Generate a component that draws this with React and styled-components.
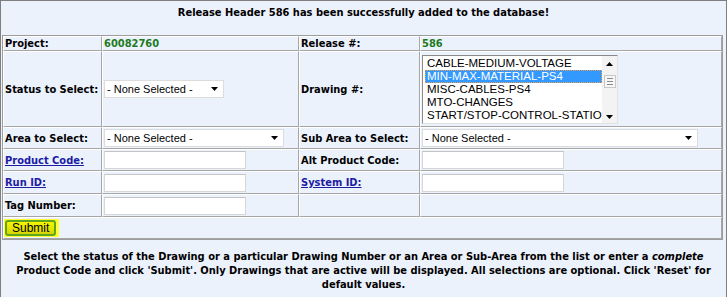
import styled, { createGlobalStyle } from "styled-components";

const GlobalStyle = createGlobalStyle`
  body {
    margin: 0;
    background: #ffffff;
  }
`;

const Panel = styled.div`
  width: 727px;
  height: 297px;
  box-sizing: border-box;
  border: 1px solid #7f7f7f;
  border-bottom: none;
  background: #ecf2fc;
  font-family: "DejaVu Sans Condensed", "DejaVu Sans", sans-serif;
  font-size: 11px;
  font-weight: bold;
  color: #000;
  overflow: hidden;
`;

const Header = styled.div`
  height: 34px;
  box-sizing: border-box;
  padding-top: 5px;
  line-height: 14px;
  text-align: center;
`;

const FormTable = styled.table`
  margin-left: 1px;
  width: 721px;
  table-layout: fixed;
  border-collapse: separate;
  border-spacing: 0;
  border: 1px solid #9c9c9c;
`;

const Cell = styled.td`
  box-sizing: border-box;
  height: ${({ $h }) => $h}px;
  padding: 0 1px;
  border-top: 1px solid #ffffff;
  border-left: 1px solid #ffffff;
  border-bottom: 1px solid #a6a6a6;
  border-right: 1px solid #a6a6a6;
  vertical-align: middle;
  white-space: nowrap;
`;

const Value = styled.span`
  color: #217a21;
`;

const LinkLabel = styled.a`
  color: #1c1ca4;
  text-decoration: underline;
`;

const SelectBox = styled.div`
  width: ${({ $w }) => $w}px;
  height: 18px;
  box-sizing: border-box;
  border: 1px solid #dcdcdc;
  background: #ffffff;
  display: flex;
  align-items: center;
  justify-content: space-between;
  padding: 0 5px 0 2px;
  font: 11px "Liberation Sans", Arial, sans-serif;
  color: #000;
`;

const TextInput = styled.div`
  width: 142px;
  height: 18px;
  box-sizing: border-box;
  border: 1px solid #d6d6d6;
  border-top-color: #c4c4c4;
  background: #ffffff;
`;

const Listbox = styled.div`
  width: 196px;
  height: 69px;
  box-sizing: border-box;
  border: 1px solid;
  border-color: #8a8a8a #e2e2e2 #e2e2e2 #8a8a8a;
  background: #ffffff;
  display: flex;
`;

const Options = styled.ul`
  flex: 1;
  margin: 0;
  padding: 1px 0 0 2px;
  list-style: none;
  overflow: hidden;
`;

const Option = styled.li`
  height: 13px;
  padding-left: 2px;
  font: 11.5px/13px "Liberation Sans", Arial, sans-serif;
  color: ${({ $selected }) => ($selected ? "#ffffff" : "#000000")};
  background: ${({ $selected }) => ($selected ? "#3399ff" : "transparent")};
  outline: ${({ $selected }) => ($selected ? "1px dotted #e8a050" : "none")};
  outline-offset: -1px;
  white-space: nowrap;
`;

const Scrollbar = styled.div`
  width: 15px;
  background: #f3f3f3;
  display: flex;
  flex-direction: column;
  align-items: center;
  justify-content: space-between;
  padding: 6px 0 4px;
`;

const Thumb = styled.div`
  width: 12px;
  height: 13px;
  box-sizing: border-box;
  border: 1px solid #c8c8c8;
  background: #f7f7f7;
  display: flex;
  flex-direction: column;
  justify-content: center;
  gap: 2px;
  padding: 0 2px;
  margin-top: -18px;

  span {
    height: 1px;
    background: #8a8a8a;
  }
`;

const SubmitWrap = styled.span`
  display: inline-block;
  background: #ffff33;
  padding: 1px 3px 1px 1px;
  margin-left: -1px;
`;

const SubmitButton = styled.button`
  display: block;
  height: 16px;
  padding: 0 5px;
  border: 2px solid #5fa51e;
  border-radius: 3px;
  background: linear-gradient(#f6f600, #d6d600);
  font: 12px/12px "Liberation Sans", Arial, sans-serif;
  color: #000;
`;

const Notes = styled.p`
  margin: 0;
  padding-top: 10px;
  line-height: 14px;
  text-align: center;

  em {
    font-style: italic;
  }
`;

const Arrow = ({ up }) => (
  <svg width="7" height="4" viewBox="0 0 7 4">
    <path d={up ? "M0 4 L3.5 0 L7 4 Z" : "M0 0 L7 0 L3.5 4 Z"} fill="#000" />
  </svg>
);

const Select = ({ width }) => (
  <SelectBox $w={width}>
    <span>- None Selected -</span>
    <Arrow />
  </SelectBox>
);

const drawings = [
  "CABLE-MEDIUM-VOLTAGE",
  "MIN-MAX-MATERIAL-PS4",
  "MISC-CABLES-PS4",
  "MTO-CHANGES",
  "START/STOP-CONTROL-STATIO",
];

const App = () => {
  return (
    <>
      <GlobalStyle />
      <Panel>
        <Header>Release Header 586 has been successfully added to the database!</Header>
        <FormTable>
          <colgroup>
            <col style={{ width: 99 }} />
            <col style={{ width: 197 }} />
            <col style={{ width: 121 }} />
            <col style={{ width: 302 }} />
          </colgroup>
          <tbody>
            <tr>
              <Cell $h={15}>Project:</Cell>
              <Cell $h={15}>
                <Value>60082760</Value>
              </Cell>
              <Cell $h={15}>Release #:</Cell>
              <Cell $h={15}>
                <Value>586</Value>
              </Cell>
            </tr>
            <tr>
              <Cell $h={76}>Status to Select:</Cell>
              <Cell $h={76}>
                <Select width={120} />
              </Cell>
              <Cell $h={76}>Drawing #:</Cell>
              <Cell $h={76}>
                <Listbox>
                  <Options>
                    {drawings.map((d, i) => (
                      <Option key={d} $selected={i === 1}>
                        {d}
                      </Option>
                    ))}
                  </Options>
                  <Scrollbar>
                    <Arrow up />
                    <Thumb>
                      <span />
                      <span />
                      <span />
                    </Thumb>
                    <Arrow />
                  </Scrollbar>
                </Listbox>
              </Cell>
            </tr>
            <tr>
              <Cell $h={22}>Area to Select:</Cell>
              <Cell $h={22}>
                <Select width={180} />
              </Cell>
              <Cell $h={22}>Sub Area to Select:</Cell>
              <Cell $h={22}>
                <Select width={276} />
              </Cell>
            </tr>
            <tr>
              <Cell $h={22}>
                <LinkLabel href="#">Product Code:</LinkLabel>
              </Cell>
              <Cell $h={22}>
                <TextInput />
              </Cell>
              <Cell $h={22}>Alt Product Code:</Cell>
              <Cell $h={22}>
                <TextInput />
              </Cell>
            </tr>
            <tr>
              <Cell $h={23}>
                <LinkLabel href="#">Run ID:</LinkLabel>
              </Cell>
              <Cell $h={23}>
                <TextInput />
              </Cell>
              <Cell $h={23}>
                <LinkLabel href="#">System ID:</LinkLabel>
              </Cell>
              <Cell $h={23}>
                <TextInput />
              </Cell>
            </tr>
            <tr>
              <Cell $h={23}>Tag Number:</Cell>
              <Cell $h={23}>
                <TextInput />
              </Cell>
              <Cell $h={23} />
              <Cell $h={23} />
            </tr>
            <tr>
              <Cell $h={22} colSpan={4}>
                <SubmitWrap>
                  <SubmitButton type="button">Submit</SubmitButton>
                </SubmitWrap>
              </Cell>
            </tr>
          </tbody>
        </FormTable>
        <Notes>
          Select the status of the Drawing or a particular Drawing Number or an Area or Sub-Area from the list or enter a{" "}
          <em>complete</em>
          <br />
          Product Code and click 'Submit'. Only Drawings that are active will be displayed. All selections are optional. Click 'Reset' for
          <br />
          default values.
        </Notes>
      </Panel>
    </>
  );
};

export default App;
